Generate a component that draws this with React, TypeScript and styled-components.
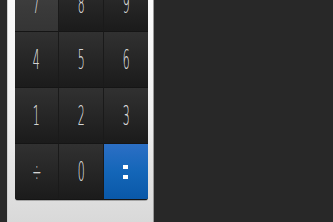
import * as React from "react";
import styled, { createGlobalStyle } from "styled-components";

const Global = createGlobalStyle`
  html, body {
    margin: 0;
    padding: 0;
    width: 333px;
    height: 222px;
    overflow: hidden;
    background: #282828;
  }
`;

const Screen = styled.div`
  display: flex;
  width: 333px;
  height: 222px;
  background: #282828;
  overflow: hidden;
`;

const Edge = styled.div`
  width: 7px;
  flex: none;
  background: #2a2a2a;
`;

const Panel = styled.div`
  width: 147px;
  flex: none;
  box-sizing: border-box;
  padding: 0 7px;
  background: linear-gradient(to bottom, #fbfbfb 0%, #eeeeee 55%, #d9d9d9 100%);
  border-left: 1px solid #cfcfcf;
  border-right: 1px solid #9a9a9a;
  overflow: hidden;
`;

const Pad = styled.div`
  margin-top: -24px;
  display: grid;
  grid-template-columns: repeat(3, 1fr);
  grid-auto-rows: 56px;
  width: 133px;
  background: #141414;
  border-radius: 0 0 3px 3px;
  overflow: hidden;
  box-shadow: 0 1px 0 rgba(0, 0, 0, 0.25);
`;

const Key = styled.div<{ $tone?: "lit" | "go" }>`
  display: flex;
  align-items: center;
  justify-content: center;
  border-right: 1px solid #1a1a1a;
  border-bottom: 1px solid #151515;
  background: ${(p) =>
    p.$tone === "lit"
      ? "linear-gradient(to bottom, #444 0%, #3a3a3a 60%, #353535 100%)"
      : p.$tone === "go"
      ? "linear-gradient(to bottom, #2c6fc5 0%, #1466b8 50%, #0a58a8 100%)"
      : "linear-gradient(to bottom, #313131 0%, #262626 50%, #1b1b1b 100%)"};
  &:nth-child(3n) {
    border-right: none;
  }
`;

const Digit = styled.span`
  font-family: "DejaVu Sans", "Liberation Sans", sans-serif;
  font-weight: 200;
  font-size: 26px;
  line-height: 1;
  color: #d4d4d4;
  transform: scaleX(0.42);
  text-shadow: 0 0 1px rgba(255, 255, 255, 0.4);
`;

const Colon = styled.div`
  display: flex;
  flex-direction: column;
  gap: 6px;
  span {
    display: block;
    width: 5px;
    height: 4px;
    background: #ffffff;
  }
`;

const Rest = styled.div`
  flex: 1;
  background: #282828;
`;

const keys = ["7", "8", "9", "4", "5", "6", "1", "2", "3", "÷", "0"];

export default function App() {
  return (
    <Screen>
      <Global />
      <Edge />
      <Panel>
        <Pad>
          {keys.map((k) => (
            <Key key={k} $tone={k === "7" ? "lit" : undefined}>
              <Digit>{k}</Digit>
            </Key>
          ))}
          <Key $tone="go">
            <Colon>
              <span />
              <span />
            </Colon>
          </Key>
        </Pad>
      </Panel>
      <Rest />
    </Screen>
  );
}
